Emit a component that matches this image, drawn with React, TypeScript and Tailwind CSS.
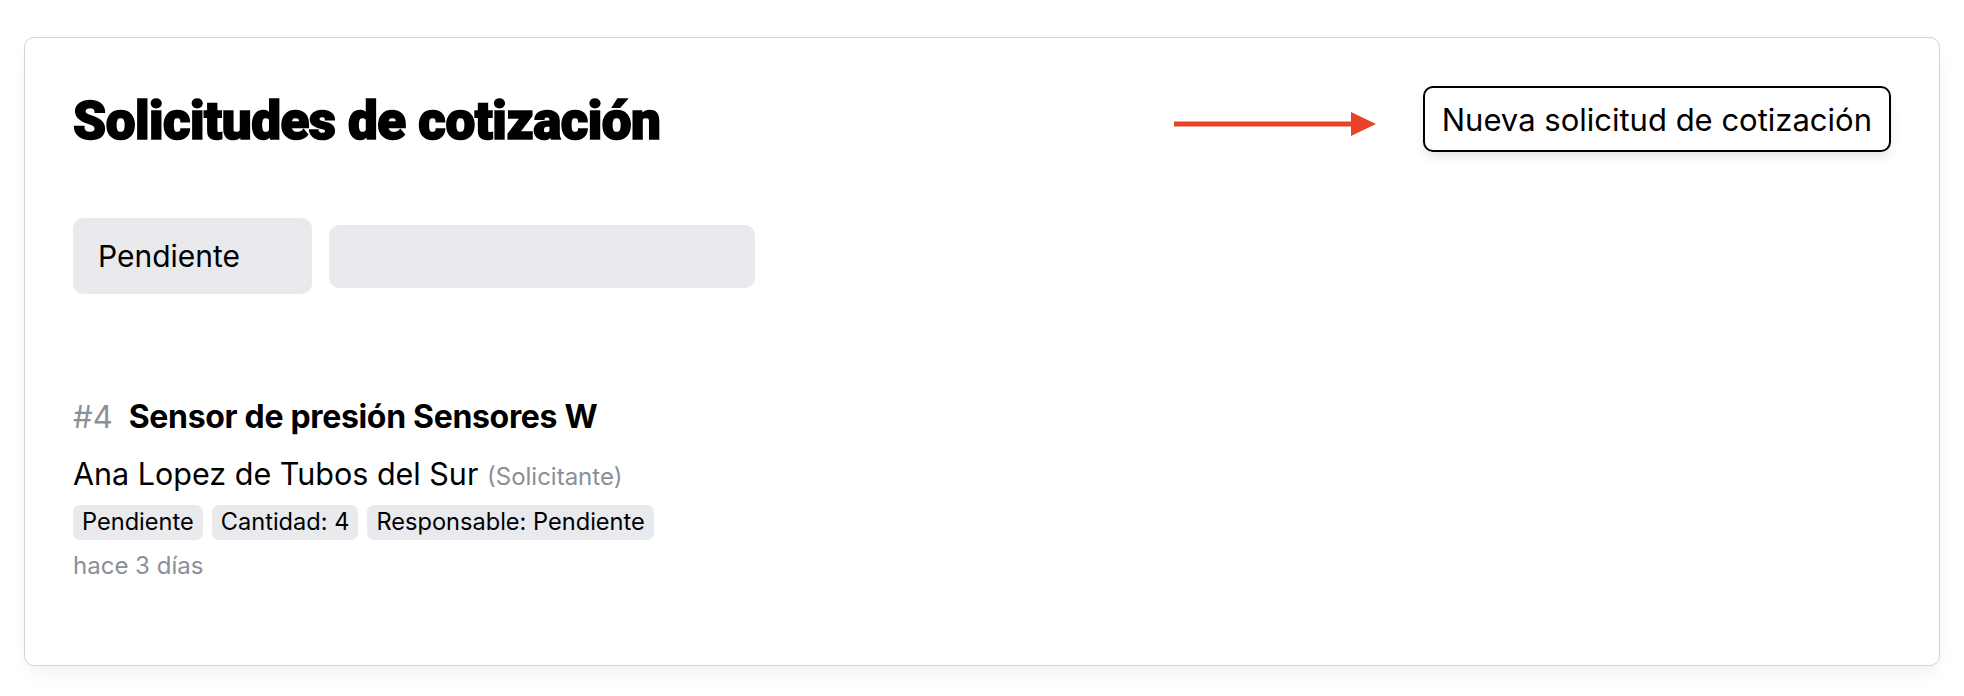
import React from "react";

export default function App() {
  return (
    <div className="min-h-[696px] w-full bg-white font-['Inter','Noto_Sans',sans-serif] text-black">
      <div className="px-6 pt-[37px] pb-8">
        <div className="rounded-[10px] border border-[#d1d5db] bg-white px-12 pt-[48px] pb-[87px] shadow-[0_10px_20px_-6px_rgba(0,0,0,0.08)]">
          <div className="flex items-center">
            <h1 className="mt-[4px] font-['Roboto','Inter',sans-serif] text-[53px] leading-none font-black tracking-[-0.01em] [-webkit-text-stroke:1.6px_black]">
              Solicitudes de cotización
            </h1>
            <div className="flex-1" />
            <svg
              className="mt-[9px] mr-[47px]"
              width="202"
              height="26"
              viewBox="0 0 202 26"
            >
              <line x1="0" y1="13" x2="180" y2="13" stroke="#e8432a" strokeWidth="5" />
              <polygon points="177,1 202,13 177,25" fill="#e8432a" />
            </svg>
            <button className="h-[66px] rounded-[10px] border-2 border-black bg-white px-[17px] text-[31px] leading-none shadow-[0_6px_12px_-2px_rgba(0,0,0,0.12)]">
              Nueva solicitud de cotización
            </button>
          </div>

          <div className="mt-[66px] flex items-center gap-[17px]">
            <div className="flex h-[76px] w-[239px] items-center rounded-[10px] bg-[#e9eaee] px-[25px] text-[30px]">
              Pendiente
            </div>
            <div className="h-[63px] w-[426px] rounded-[10px] bg-[#e9eaee]" />
          </div>

          <div className="mt-[107px]">
            <div className="flex items-baseline gap-[16px] text-[31px] leading-none">
              <span className="text-[#8b8f97]">#4</span>
              <span className="text-[32px] font-bold tracking-[-0.01em]">Sensor de presión Sensores W</span>
            </div>
            <div className="mt-[26px] text-[30.5px] leading-none">
              Ana Lopez de Tubos del Sur{" "}
              <span className="text-[24px] text-[#8b8f97]">(Solicitante)</span>
            </div>
            <div className="mt-[15px] flex gap-[9px] text-[23.6px]">
              <span className="flex h-[35px] items-center rounded-[7px] bg-[#e9eaee] px-[9px]">Pendiente</span>
              <span className="flex h-[35px] items-center rounded-[7px] bg-[#e9eaee] px-[9px]">Cantidad: 4</span>
              <span className="flex h-[35px] items-center rounded-[7px] bg-[#e9eaee] px-[9px]">Responsable: Pendiente</span>
            </div>
            <div className="mt-[14px] text-[24px] leading-none text-[#8b8f97]">hace 3 días</div>
          </div>
        </div>
      </div>
    </div>
  );
}
